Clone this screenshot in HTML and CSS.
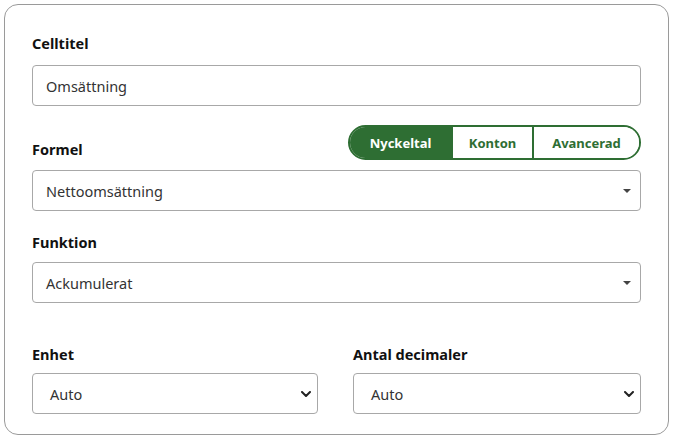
FILE: index.html
```html
<!DOCTYPE html>
<html lang="sv">
<head>
<meta charset="utf-8">
<title>Cellinställningar</title>
<link rel="stylesheet" href="styles.css">
</head>
<body>
<div class="card">
  <div class="field">
    <div class="label">Celltitel</div>
    <div class="input">Omsättning</div>
  </div>

  <div class="field field-formel">
    <div class="label-row">
      <div class="label">Formel</div>
      <div class="toggle">
        <span class="seg active">Nyckeltal</span>
        <span class="seg">Konton</span>
        <span class="seg">Avancerad</span>
      </div>
    </div>
    <div class="input select">
      <span>Nettoomsättning</span>
      <svg class="caret" width="8" height="4" viewBox="0 0 8 4"><path d="M0 0 H8 L4 4 Z" fill="#444"/></svg>
    </div>
  </div>

  <div class="field field-funktion">
    <div class="label">Funktion</div>
    <div class="input select">
      <span>Ackumulerat</span>
      <svg class="caret" width="8" height="4" viewBox="0 0 8 4"><path d="M0 0 H8 L4 4 Z" fill="#444"/></svg>
    </div>
  </div>

  <div class="cols">
    <div class="field">
      <div class="label">Enhet</div>
      <div class="input native">
        <span>Auto</span>
        <svg class="chev" width="10" height="6" viewBox="0 0 10 6"><path d="M1 1 L5 5 L9 1" fill="none" stroke="#222" stroke-width="2" stroke-linecap="round" stroke-linejoin="round"/></svg>
      </div>
    </div>
    <div class="field">
      <div class="label">Antal decimaler</div>
      <div class="input native">
        <span>Auto</span>
        <svg class="chev" width="10" height="6" viewBox="0 0 10 6"><path d="M1 1 L5 5 L9 1" fill="none" stroke="#222" stroke-width="2" stroke-linecap="round" stroke-linejoin="round"/></svg>
      </div>
    </div>
  </div>
</div>
</body>
</html>
```

FILE: styles.css
```css
* { box-sizing: border-box; }
html, body { margin: 0; padding: 0; background: #fff; }
body {
  font-family: "Noto Sans", "Open Sans", sans-serif;
  color: #222;
  padding: 4px 9px 0 4px;
}
.card {
  border: 1px solid #9a9a9a;
  border-radius: 14px;
  padding: 28px 27px 19px 27px;
  height: 431px;
}
.field { display: flex; flex-direction: column; }
.label {
  font-weight: 700;
  font-size: 14.5px;
  line-height: 20px;
  color: #111;
  margin-bottom: 12px;
}
.input {
  height: 41px;
  border: 1px solid #a8a8a8;
  border-radius: 4px;
  padding: 0 13px;
  display: flex;
  align-items: center;
  font-size: 14.5px;
  color: #333;
}
.select { justify-content: space-between; padding-right: 9px; }
.field-formel { margin-top: 19px; }
.field-formel .label-row {
  display: flex;
  justify-content: space-between;
  align-items: flex-end;
  margin-bottom: 10px;
}
.field-formel .label { margin-bottom: 2px; line-height: 18px; }
.field-funktion { margin-top: 21px; }
.field-funktion .label { margin-bottom: 10px; }
.toggle {
  display: flex;
  height: 35px;
  border: 2px solid #2e6e33;
  border-radius: 18px;
  overflow: hidden;
}
.seg {
  display: flex;
  align-items: center;
  justify-content: center;
  font-size: 13px;
  font-weight: 700;
  color: #2e6e33;
  background: #fff;
}
.seg:nth-child(1) { width: 101px; }
.seg:nth-child(2) { width: 83px; border-left: 2px solid #2e6e33; border-right: 2px solid #2e6e33; }
.seg:nth-child(3) { width: 105px; }
.seg.active { background: #2e6e33; color: #fff; }
.cols {
  display: grid;
  grid-template-columns: 286px 288px;
  justify-content: space-between;
  margin-top: 41px;
}
.cols .label { margin-bottom: 9px; }
.native { justify-content: space-between; padding-left: 17px; padding-right: 6px; }
.native .chev { margin-top: 1px; }
```
